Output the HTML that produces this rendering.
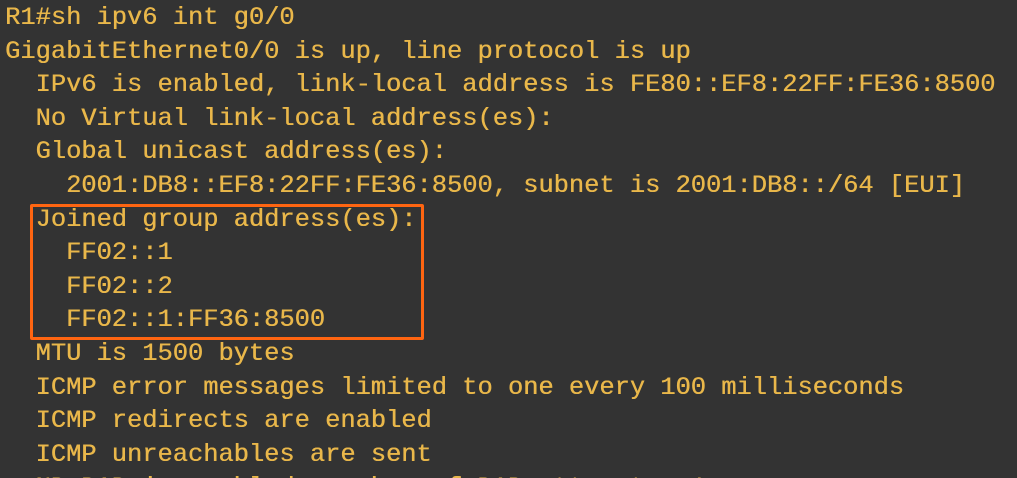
<!DOCTYPE html>
<html><head><meta charset="utf-8"><style>
html,body{margin:0;padding:0;width:1017px;height:478px;overflow:hidden;}
body{background:#333333;position:relative;}
pre{margin:0;position:absolute;left:5px;top:1px;height:477px;overflow:hidden;font-family:"Liberation Mono",monospace;font-size:25.4px;line-height:33.6px;color:#e9b74a;text-shadow:0.4px 0 0 #e9b74a;}
.box{position:absolute;left:30px;top:204px;width:388px;height:130px;border:3px solid #ff6511;border-radius:2px;}
</style></head><body>
<pre>R1#sh ipv6 int g0/0
GigabitEthernet0/0 is up, line protocol is up
  IPv6 is enabled, link-local address is FE80::EF8:22FF:FE36:8500
  No Virtual link-local address(es):
  Global unicast address(es):
    2001:DB8::EF8:22FF:FE36:8500, subnet is 2001:DB8::/64 [EUI]
  Joined group address(es):
    FF02::1
    FF02::2
    FF02::1:FF36:8500
  MTU is 1500 bytes
  ICMP error messages limited to one every 100 milliseconds
  ICMP redirects are enabled
  ICMP unreachables are sent
  ND DAD is enabled, number of DAD attempts: 1</pre>
<div class="box"></div>
</body></html>
